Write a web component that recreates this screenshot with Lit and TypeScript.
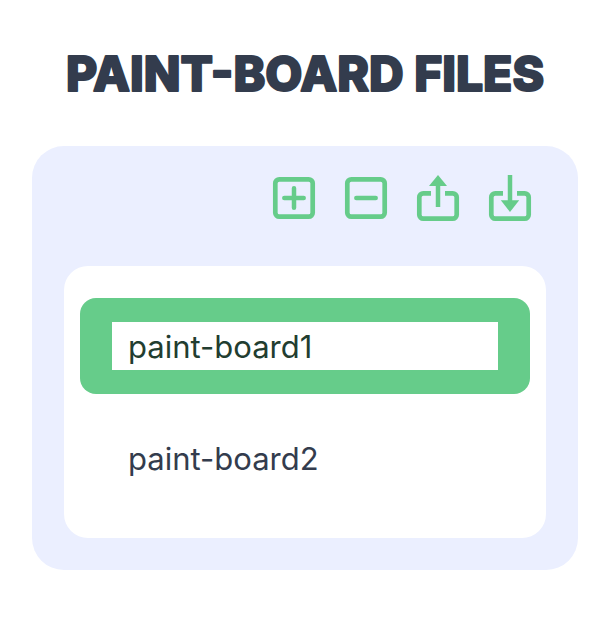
import { LitElement, css, html, svg } from "lit";
import { customElement, state } from "lit/decorators.js";
import { classMap } from "lit/directives/class-map.js";

const frame = svg`<rect x="5.3" y="5.3" width="37.4" height="37.4" rx="4" stroke-width="4.7" />`;
const tray = svg`<path stroke-width="4.7" d="M17 19.3H9.3a4 4 0 0 0-4 4V40.700a4 4 0 0 0 4 4H38.700a4 4 0 0 0 4-4V23.300a4 4 0 0 0-4-4H31" />`;

const actions = [
  {
    label: "Add board",
    icon: svg`${frame}<path stroke-width="4.5" stroke-linecap="round" d="M14.300 24H33.700M24 14.300V33.700" />`,
  },
  {
    label: "Remove board",
    icon: svg`${frame}<path stroke-width="4.5" stroke-linecap="round" d="M14.300 24H33.700" />`,
  },
  {
    label: "Export board",
    icon: svg`${tray}<path stroke-width="4.5" d="M24 10V33" /><path class="solid" d="M24 1L33 12H15Z" />`,
  },
  {
    label: "Import board",
    icon: svg`${tray}<path stroke-width="4.5" d="M24 1V28" /><path class="solid" d="M24 38L33.200 26.300H14.800Z" />`,
  },
];

@customElement("app-root")
export class AppRoot extends LitElement {
  static styles = css`
    :host {
      display: block;
      padding: 32px;
      background: #fff;
      color: #333c4d;
      font-family: Inter, "Noto Sans", sans-serif;
    }
    * {
      box-sizing: border-box;
    }
    .title {
      margin: 0 0 28px;
      font-size: 48px;
      font-weight: 800;
    }
    .lettering {
      display: block;
      width: 100%;
      height: 86px;
      overflow: visible;
      fill: currentColor;
      stroke: currentColor;
      stroke-width: 2px;
      stroke-linejoin: round;
      text-anchor: middle;
    }
    .card {
      padding: 28px 32px 32px;
      border-radius: 32px;
      background: #ebefff;
    }
    .toolbar {
      display: flex;
      justify-content: flex-end;
      gap: 24px;
      padding: 0 12px;
      margin-bottom: 44px;
    }
    .action {
      width: 48px;
      height: 48px;
      padding: 0;
      border: 0;
      background: none;
      color: #66cc8a;
      cursor: pointer;
    }
    .icon {
      display: block;
      width: 100%;
      height: 100%;
      fill: none;
      stroke: currentColor;
    }
    .solid {
      fill: currentColor;
      stroke: none;
    }
    .list {
      display: grid;
      gap: 16px;
      margin: 0;
      padding: 32px 16px;
      border-radius: 24px;
      background: #fff;
      list-style: none;
    }
    .row {
      padding: 24px 32px;
      border-radius: 16px;
    }
    .row.active {
      background: #66cc8a;
      color: #223d30;
    }
    .name {
      display: block;
      width: 100%;
      height: 48px;
      padding: 0 16px;
      border: 0;
      outline: 0;
      background: #fff;
      color: inherit;
      font: inherit;
      font-size: 31px;
    }
  `;

  @state() private files = ["paint-board1", "paint-board2"];
  @state() private active = 0;

  render() {
    return html`
      <h1 class="title">
        <svg class="lettering"><text x="50%" y="59">PAINT-BOARD FILES</text></svg>
      </h1>
      <main class="card">
        <div class="toolbar">
          ${actions.map(
            (a) => html`<button class="action" type="button" aria-label=${a.label}>
              <svg class="icon" viewBox="0 0 48 48" aria-hidden="true">${a.icon}</svg>
            </button>`
          )}
        </div>
        <ul class="list">
          ${this.files.map(
            (file, i) => html`<li
              class=${classMap({ row: true, active: i === this.active })}
              @click=${() => (this.active = i)}
            >
              <input class="name" type="text" aria-label="Board name" .value=${file} />
            </li>`
          )}
        </ul>
      </main>
    `;
  }
}
